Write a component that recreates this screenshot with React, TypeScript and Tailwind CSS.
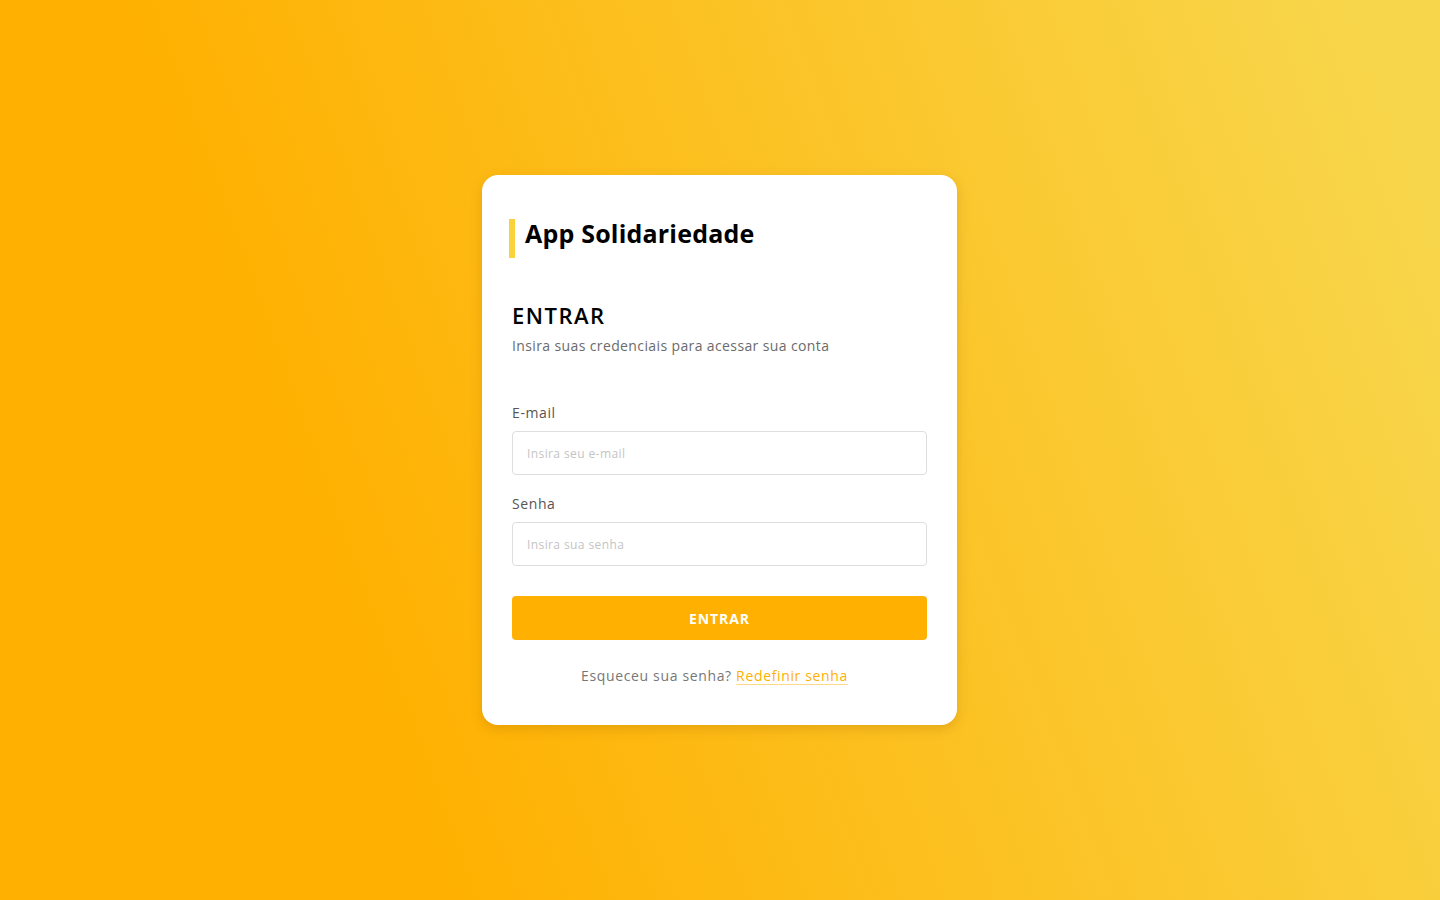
import { useState } from 'react';

export default function App() {
  const [email, setEmail] = useState('');
  const [senha, setSenha] = useState('');

  return (
    <div className="min-h-screen w-full flex items-center justify-center bg-linear-[70deg] from-[#ffb000] from-25% to-[#f8d64b] to-95% font-['Open_Sans',sans-serif]">
      <div className="mr-px w-[475px] bg-white rounded-[16px] shadow-[0_4px_12px_rgba(160,100,0,0.25)] px-[30px] pt-[44px] pb-[39px]">
        {/* cabeçalho */}
        <div className="ml-[-3px] h-[39px] flex items-start border-l-[6px] border-[#f9d23c] pl-[10px]">
          <h1 className="text-[25px] leading-[29px] font-bold text-black tracking-[0.2px]">App Solidariedade</h1>
        </div>

        <h2 className="mt-[43px] h-[28px] leading-[28px] text-[22px] font-semibold text-black tracking-[1.5px]">ENTRAR</h2>
        <p className="mt-[7px] h-[20px] leading-[20px] text-[14px] text-[#6b6b6b] tracking-[0.38px]">
          Insira suas credenciais para acessar sua conta
        </p>

        <form className="mt-[47px] flex flex-col" onSubmit={(e) => e.preventDefault()}>
          <label className="h-[20px] leading-[20px] text-[14px] text-[#555] tracking-[0.6px]">E-mail</label>
          <input
            type="email"
            value={email}
            onChange={(e) => setEmail(e.target.value)}
            placeholder="Insira seu e-mail"
            className="mt-[8px] h-[44px] w-full rounded-[4px] border border-[#dedede] px-[14px] text-[12px] tracking-[0.4px] text-[#333] placeholder:text-[#c4c4c4] outline-none"
          />

          <label className="mt-[19px] h-[20px] leading-[20px] text-[14px] text-[#555] tracking-[0.6px]">Senha</label>
          <input
            type="password"
            value={senha}
            onChange={(e) => setSenha(e.target.value)}
            placeholder="Insira sua senha"
            className="mt-[8px] h-[44px] w-full rounded-[4px] border border-[#dedede] px-[14px] text-[12px] tracking-[0.4px] text-[#333] placeholder:text-[#c4c4c4] outline-none"
          />

          <button
            type="submit"
            className="mt-[30px] h-[44px] w-full rounded-[4px] bg-[#ffb000] text-white text-[14px] font-bold tracking-[0.9px]"
          >
            ENTRAR
          </button>
        </form>

        <p className="mt-[26px] pr-[10px] h-[20px] leading-[20px] text-center text-[14px] text-[#777] tracking-[0.65px]">
          Esqueceu sua senha?{' '}
          <a href="#" className="text-[#ffb000] underline decoration-[#ffd98a] underline-offset-[3px]">
            Redefinir senha
          </a>
        </p>
      </div>
    </div>
  );
}
